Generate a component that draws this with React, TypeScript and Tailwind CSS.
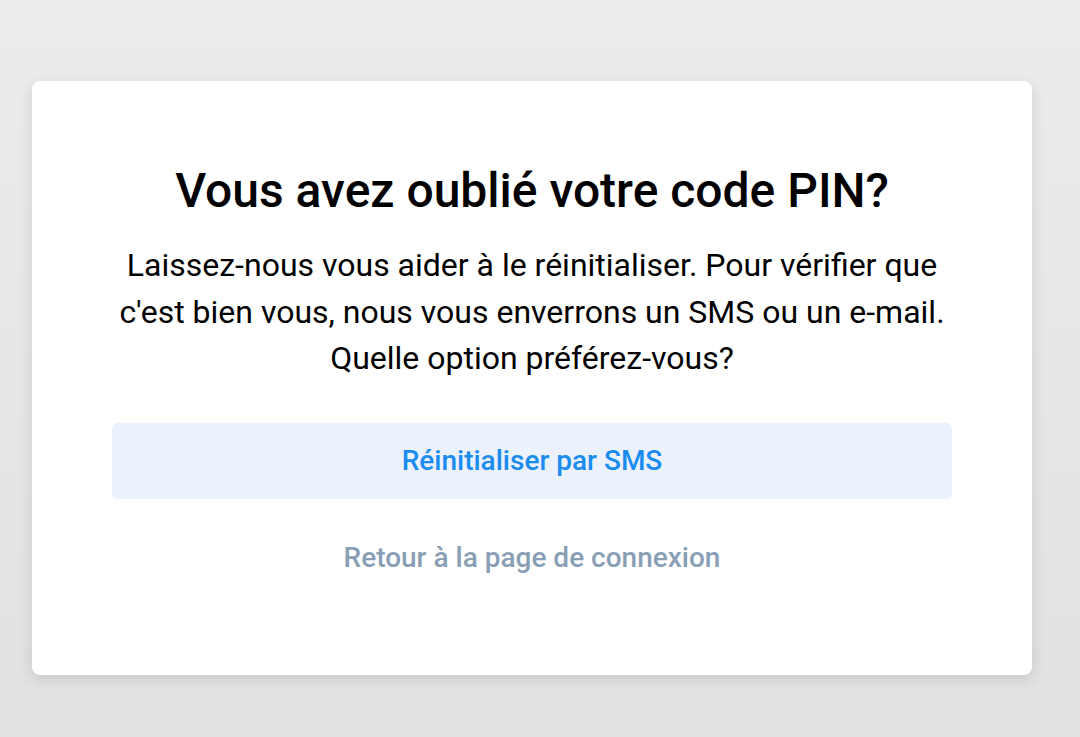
export default function App() {
  return (
    <div
      className="flex min-h-[737px] w-full items-start bg-gradient-to-b from-[#ececec] to-[#e1e1e1] pl-[32px] pt-[81px]"
      style={{ fontFamily: 'Roboto, "Liberation Sans", sans-serif' }}
    >
      <div className="flex h-[594px] w-[1000px] flex-col items-center rounded-lg bg-white px-20 pt-[82px] shadow-[0_4px_14px_rgba(0,0,0,0.12)]">
        <h1 className="text-center text-[48px] font-medium leading-[56px] text-black">
          Vous avez oublié votre code PIN?
        </h1>
        <p className="mt-[23px] text-center text-[32px] leading-[46.5px] text-black">
          Laissez-nous vous aider à le réinitialiser. Pour vérifier que
          <br />
          c'est bien vous, nous vous enverrons un SMS ou un e-mail.
          <br />
          Quelle option préférez-vous?
        </p>
        <button className="mt-[41px] flex h-[76px] w-full items-center justify-center rounded-md bg-[#ebf2fd] text-[28px] font-medium text-[#1a8cf0]">
          Réinitialiser par SMS
        </button>
        <a className="mt-[41px] text-[28px] font-medium leading-[36px] text-[#8a9fb5]">
          Retour à la page de connexion
        </a>
      </div>
    </div>
  );
}
